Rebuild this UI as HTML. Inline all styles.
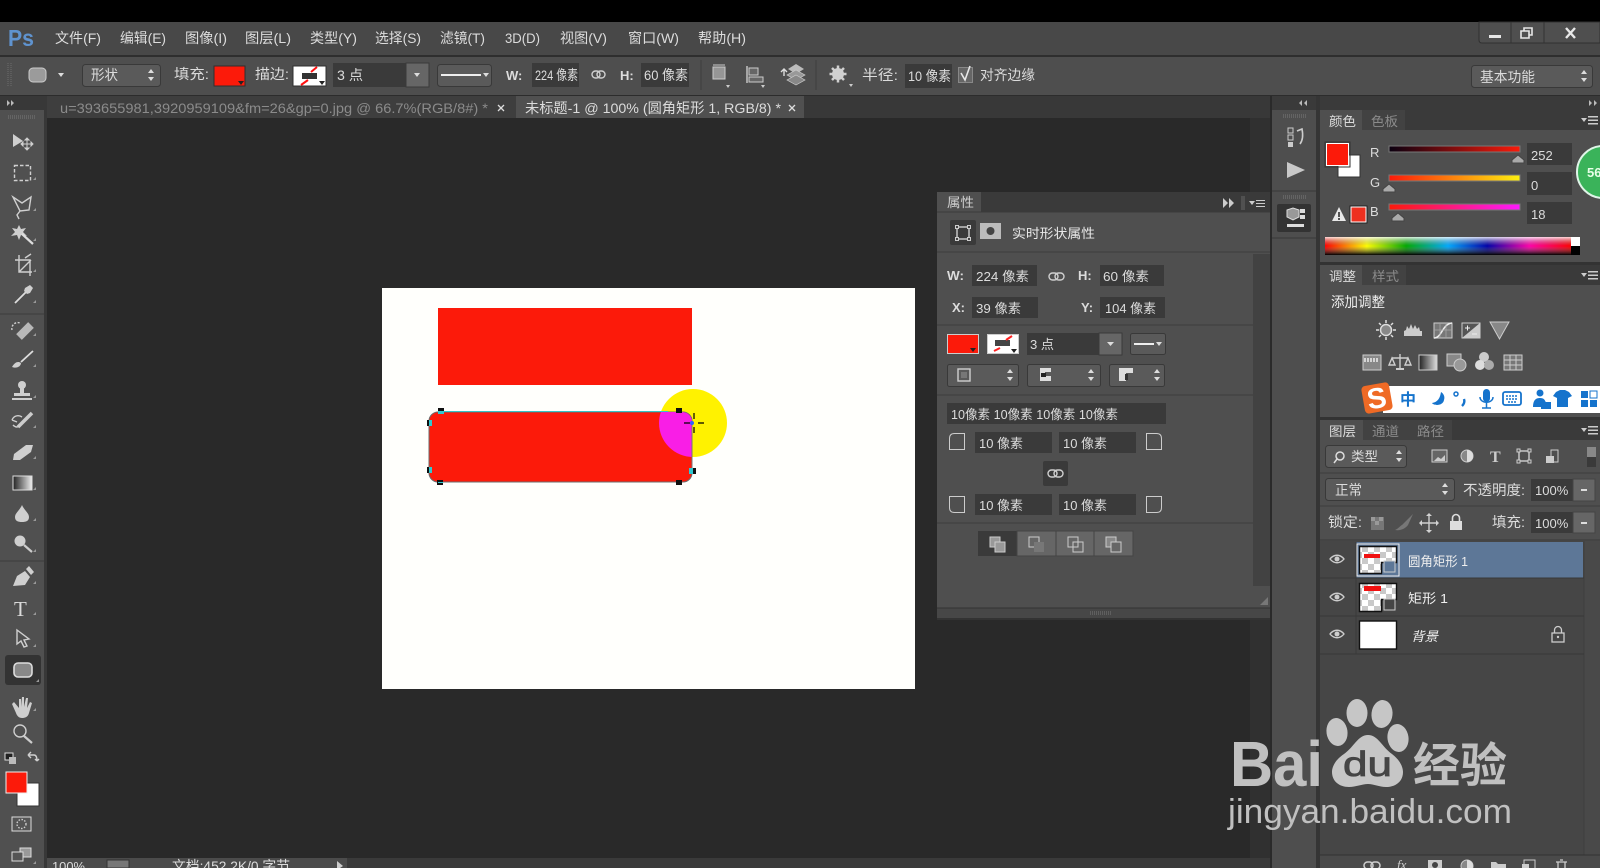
<!DOCTYPE html>
<html lang="zh"><head><meta charset="utf-8"><title>Photoshop</title>
<style>
html,body{margin:0;padding:0;background:#000;width:1600px;height:868px;overflow:hidden}
svg{display:block;position:absolute;left:0;top:0;filter:blur(.35px)}
text{font-family:"Liberation Sans","Noto Sans CJK SC",sans-serif;fill:#dcdcdc;font-size:14px;white-space:pre}
.d{fill:#8b8b8b}.s{font-size:13px}
.i{fill:none;stroke:#cfcfcf;stroke-width:1.4}
.f{fill:#cfcfcf}
.in{fill:#3a3a3a}
.btn{fill:#5a5a5a;stroke:#393939}
</style></head><body>
<svg width="1600" height="868" viewBox="0 0 1600 868" xmlns="http://www.w3.org/2000/svg">
<defs>
<pattern id="ck" width="12" height="12" patternUnits="userSpaceOnUse"><rect width="12" height="12" fill="#fff"/><rect width="6" height="6" fill="#c9c9c9"/><rect x="6" y="6" width="6" height="6" fill="#c9c9c9"/></pattern>
<linearGradient id="spec"><stop offset="0" stop-color="#f00"/><stop offset=".17" stop-color="#ff0"/><stop offset=".33" stop-color="#0a0"/><stop offset=".5" stop-color="#0af"/><stop offset=".66" stop-color="#00a"/><stop offset=".83" stop-color="#f0a"/><stop offset="1" stop-color="#f00"/></linearGradient>
<linearGradient id="specv" x2="0" y2="1"><stop offset="0" stop-color="#fff" stop-opacity=".85"/><stop offset=".5" stop-color="#888" stop-opacity="0"/><stop offset="1" stop-color="#000"/></linearGradient>
<linearGradient id="gr"><stop offset="0" stop-color="#0a0010"/><stop offset="1" stop-color="#fc1a0a"/></linearGradient>
<linearGradient id="gg"><stop offset="0" stop-color="#fc1a0a"/><stop offset="1" stop-color="#fcf010"/></linearGradient>
<linearGradient id="gb"><stop offset="0" stop-color="#fc1a0a"/><stop offset="1" stop-color="#fc1aff"/></linearGradient>
<linearGradient id="gh"><stop offset="0" stop-color="#222"/><stop offset="1" stop-color="#ddd"/></linearGradient>
<clipPath id="rr"><rect x="429" y="412" width="263" height="70" rx="10"/></clipPath>
</defs>

<!-- frame -->
<rect width="1600" height="868" fill="#292929"/>
<rect width="1600" height="22" fill="#000"/>
<rect y="22" width="1600" height="33" fill="#484848"/>
<rect y="55" width="1600" height="2" fill="#2e2e2e"/>
<rect y="57" width="1600" height="39" fill="#4e4e4e"/>
<rect y="95" width="1600" height="1" fill="#2c2c2c"/>
<rect y="96" width="1272" height="22" fill="#383838"/>
<rect x="1250" y="118" width="22" height="750" fill="#303030"/>
<rect x="1272" y="96" width="328" height="14" fill="#3a3a3a"/>

<!-- title bar -->
<text x="8" y="46" style="font-size:23px;font-weight:bold;fill:#5f93cf" textLength="26" lengthAdjust="spacingAndGlyphs">Ps</text>
<text x="55" y="43" textLength="46" lengthAdjust="spacingAndGlyphs">文件(F)</text>
<text x="120" y="43" textLength="46" lengthAdjust="spacingAndGlyphs">编辑(E)</text>
<text x="185" y="43" textLength="42" lengthAdjust="spacingAndGlyphs">图像(I)</text>
<text x="245" y="43" textLength="46" lengthAdjust="spacingAndGlyphs">图层(L)</text>
<text x="310" y="43" textLength="47" lengthAdjust="spacingAndGlyphs">类型(Y)</text>
<text x="375" y="43" textLength="46" lengthAdjust="spacingAndGlyphs">选择(S)</text>
<text x="440" y="43" textLength="45" lengthAdjust="spacingAndGlyphs">滤镜(T)</text>
<text x="505" y="43" textLength="35" lengthAdjust="spacingAndGlyphs">3D(D)</text>
<text x="560" y="43" textLength="47" lengthAdjust="spacingAndGlyphs">视图(V)</text>
<text x="628" y="43" textLength="51" lengthAdjust="spacingAndGlyphs">窗口(W)</text>
<text x="698" y="43" textLength="48" lengthAdjust="spacingAndGlyphs">帮助(H)</text>
<!-- window buttons -->
<path d="M1479 22v18q0 3 3 3h118v-21z" fill="#4f4f4f" stroke="#303030"/>
<path d="M1511 22v21M1544 22v21" stroke="#333"/>
<rect x="1489" y="35" width="12" height="3" fill="#e6e6e6"/>
<path d="M1521 31h8v7h-8zM1524 31v-3h8v7h-3" fill="none" stroke="#e6e6e6" stroke-width="1.6"/>
<path d="M1566 28l9 10M1575 28l-9 10" stroke="#e8e8e8" stroke-width="2.4"/>

<!-- options bar -->
<path d="M8 63v24M11 63v24" stroke="#6c6c6c" stroke-dasharray="1 1"/>
<rect x="29" y="68" width="17" height="14" rx="4" fill="#9b9b9b" stroke="#ccc"/>
<path d="M58 73h6l-3 4z" fill="#ddd"/>
<rect x="82.500" y="64.500" width="78" height="22" rx="3" class="btn"/>
<text x="91" y="80" textLength="27" lengthAdjust="spacingAndGlyphs">形状</text>
<path d="M148 73l3-4 3 4zM148 77l3 4 3-4z" fill="#ddd"/>
<text x="174" y="79" textLength="35" lengthAdjust="spacingAndGlyphs">填充:</text>
<rect x="214" y="66" width="31" height="20" fill="#fc1a0a" stroke="#2f2f2f"/>
<path d="M238 81h6l-3 4z" fill="#222"/>
<text x="255" y="79" textLength="34" lengthAdjust="spacingAndGlyphs">描边:</text>
<rect x="293" y="66" width="33" height="20" fill="#fff" stroke="#2f2f2f"/>
<rect x="302" y="73" width="15" height="6" fill="#333"/>
<path d="M301 85l7-5M311 72l6-5" stroke="#f11" stroke-width="2"/><path d="M319 81h6l-3 4z" fill="#222"/>
<rect x="333" y="63" width="73" height="24" class="in"/><rect x="406" y="63" width="23" height="24" fill="#666" stroke="#3a3a3a"/>
<path d="M414 73h6l-3 4z" fill="#ddd"/>
<text x="337" y="80" textLength="26" lengthAdjust="spacingAndGlyphs">3 点</text>
<rect x="437.500" y="64.500" width="54" height="22" rx="3" class="btn"/>
<rect x="441" y="74" width="40" height="2" fill="#eee"/><path d="M483 73h6l-3 4z" fill="#ddd"/>
<text x="506" y="80" style="font-weight:bold;font-size:13px">W:</text>
<rect x="532" y="63" width="47" height="24" class="in"/>
<text x="535" y="80" textLength="43" lengthAdjust="spacingAndGlyphs">224 像素</text>
<rect x="592" y="71" width="8" height="7" rx="3.500" class="i"/><rect x="597" y="71" width="8" height="7" rx="3.500" class="i"/>
<text x="620" y="80" style="font-weight:bold;font-size:13px">H:</text>
<rect x="641" y="63" width="48" height="24" class="in"/>
<text x="644" y="80" textLength="44" lengthAdjust="spacingAndGlyphs">60 像素</text>
<path d="M701 60v30M816 60v30" stroke="#3e3e3e"/>
<rect x="713" y="67" width="12" height="12" fill="#969696" stroke="#ccc"/><path d="M713 65h12" stroke="#ccc"/><path d="M726 85h4l-2 3z" fill="#ccc"/>
<path d="M747 66v17" stroke="#ccc" stroke-width="1.400"/><rect x="749" y="68" width="9" height="7" fill="#666" stroke="#ccc"/><rect x="749" y="77" width="14" height="5" fill="#666" stroke="#ccc"/><path d="M761 85h4l-2 3z" fill="#ccc"/>
<path d="M796 64l8 5-8 5-8-5z" fill="#bbb"/><path d="M796 70l9 5-9 5-9-5z" fill="#999" stroke="#ccc" stroke-width=".7"/><path d="M796 75l9 5-9 5-9-5z" fill="#888" stroke="#ccc" stroke-width=".7"/>
<path d="M784 76v-7M781 72l3-3 3 3" fill="none" stroke="#ddd" stroke-width="1.400"/>
<g transform="translate(838 74)"><circle r="6" fill="#d0d0d0"/><circle r="2.500" fill="#555"/><path d="M0-8.500V8.500M-8.500 0H8.500M-6-6L6 6M-6 6L6-6" stroke="#d0d0d0" stroke-width="2.500"/></g>
<path d="M849 84h4l-2 3z" fill="#ccc"/>
<text x="862" y="80" textLength="36" lengthAdjust="spacingAndGlyphs">半径:</text>
<rect x="905" y="64" width="47" height="24" class="in"/>
<text x="908" y="81" textLength="43" lengthAdjust="spacingAndGlyphs">10 像素</text>
<rect x="958.500" y="67.500" width="14" height="15" fill="#666" stroke="#888"/><path d="M961 73l4 7 5-14" fill="none" stroke="#e8e8e8" stroke-width="1.600"/>
<text x="980" y="80" textLength="55" lengthAdjust="spacingAndGlyphs">对齐边缘</text>
<rect x="1471.500" y="65.500" width="121" height="22" rx="3" class="btn"/>
<text x="1480" y="82" textLength="55" lengthAdjust="spacingAndGlyphs">基本功能</text>
<path d="M1581 74l3-4 3 4zM1581 78l3 4 3-4z" fill="#ddd"/>

<!-- tabs -->
<path d="M7 100l3 3-3 3zM11 100l3 3-3 3z" fill="#bbb"/>
<rect x="46" y="96" width="470" height="22" fill="#3e3e3e"/>
<rect x="516" y="96" width="288" height="22" fill="#505050"/>
<text x="60" y="113" class="d" textLength="428" lengthAdjust="spacingAndGlyphs">u=393655981,3920959109&amp;fm=26&amp;gp=0.jpg @ 66.7%(RGB/8#) *</text>
<path d="M498 105l6 6M504 105l-6 6M789 105l6 6M795 105l-6 6" stroke="#ddd" stroke-width="1.300"/>
<text x="525" y="113" textLength="256" lengthAdjust="spacingAndGlyphs">未标题-1 @ 100% (圆角矩形 1, RGB/8) *</text>

<!-- left toolbar -->
<rect y="110" width="44" height="758" fill="#505050"/>
<rect x="44" y="96" width="3" height="772" fill="#383838"/>
<path d="M8 116h28M8 118h28" stroke="#777" stroke-dasharray="1 1"/>
<path d="M0 314h44M0 561h44" stroke="#3c3c3c"/>
<!-- move --><path class="f" d="M13 134l10 7-10 6z"/><path d="M27 139v10M22 144h10M27 138l-2 2h4zM27 150l-2-2h4zM21 144l2-2v4zM33 144l-2-2v4z" stroke="#cfcfcf" fill="#cfcfcf" stroke-width="1"/>
<!-- marquee --><rect x="14.500" y="165.500" width="16" height="15" class="i" stroke-dasharray="3.500 2"/>
<!-- lasso --><path class="i" d="M13 197l9 6 9-6-2 13-9 1-7-14zM20 211l-3 4 2 4"/>
<!-- wand --><g transform="translate(19 232)"><path class="f" d="M0-7l2 4 5-1-3 4 4 4-6-1-2 5-2-5-6 1 4-4-3-4 5 1z"/><path d="M3 2l11 10" stroke="#ddd" stroke-width="2.200"/></g>
<!-- crop --><path class="i" d="M19 255v17h13M15 260h15v16M19 272l12-12M25 258l6-4" stroke-width="1.800"/>
<!-- eyedrop --><path d="M15 303l11-11" stroke="#ddd" stroke-width="1.800"/><path class="f" d="M25 288l5-3 3 3-3 5-3 1-3-3z"/>
<!-- heal --><path d="M19 337l12-12" stroke="#b8b8b8" stroke-width="8"/><path class="i" d="M12 330a6 6 0 0 1 8-7" stroke-dasharray="2 1.500"/>
<!-- brush --><path class="f" d="M12 367c3-5 6-6 9-4 0 3-4 6-9 4z"/><path d="M21 362l12-11" stroke="#ddd" stroke-width="1.800"/>
<!-- stamp --><path class="f" d="M12 398h20v2H12zM14 393h16v3H14zM20 387h4v6h-4z"/><circle cx="22" cy="385" r="4" class="f"/>
<!-- history --><path d="M18 427l14-14" stroke="#ccc" stroke-width="3.500"/><path class="i" d="M12 420c2-5 7-5 10-3M12 420l5 2M13 425c3 3 5 2 7 1"/>
<!-- eraser --><path class="f" d="M14 454l12-9h7l-2 7-11 8h-7z"/>
<!-- gradient --><linearGradient id="tg"><stop offset="0" stop-color="#222"/><stop offset="1" stop-color="#eee"/></linearGradient><rect x="13" y="476" width="19" height="14" fill="url(#tg)" stroke="#ddd"/>
<!-- drop --><path class="f" d="M22 505c2 5 7 8 7 12s-3 5-7 5-7-1-7-5 5-7 7-12z"/>
<!-- sponge --><circle cx="20" cy="541" r="5.500" class="f"/><path d="M24 545l8 7" stroke="#ccc" stroke-width="2.200"/>
<!-- pen --><path class="f" d="M13 586l4-10 8-5 5 6-5 8zM26 569l3-3 5 6-3 3z"/>
<!-- T --><text x="14" y="616" style="font-family:'Liberation Serif',serif;font-size:21px;fill:#dadada">T</text>
<!-- path select --><path class="i" d="M17 630l12 9-5 1 3 6-3 1-3-6-4 3z"/>
<!-- rect tool --><rect x="5" y="655" width="36" height="30" rx="3" fill="#333"/><rect x="14" y="663" width="18" height="14" rx="4" fill="#888" stroke="#ddd" stroke-width="1.600"/>
<!-- hand --><path class="f" d="M14 702l5 6v-9h2v8l1-10h2v10l2-9h2l-1 10 3-6 2 1-3 10c-1 4-4 5-7 5s-5-2-6-5l-4-9z"/>
<!-- zoom --><circle cx="20" cy="731" r="6" class="i" stroke-width="2"/><path d="M24 736l8 7" stroke="#ccc" stroke-width="2.200"/>
<!-- swap --><rect x="5" y="753" width="8" height="7" fill="#222" stroke="#ddd"/><rect x="9" y="757" width="7" height="7" fill="#bbb"/>
<path class="i" d="M28 755l6 0c2 0 3 2 3 6M28 755l3-3M28 755l3 3M37 761l-2-2M37 761l2-2"/>
<!-- colors --><rect x="17" y="783" width="22" height="23" fill="#fff" stroke="#333"/><rect x="6" y="772" width="21" height="21" fill="#fc1a0a" stroke="#eee"/>
<rect x="12" y="817" width="19" height="14" fill="#555" stroke="#ddd"/><circle cx="21.500" cy="824" r="4.500" class="i" stroke-dasharray="1.500 1.500" stroke-width="1"/>
<rect x="20" y="848" width="11" height="9" fill="#999" stroke="#ddd"/><rect x="12" y="852" width="11" height="9" fill="#555" stroke="#ddd"/>
<path d="M33 180l3-3v3zM33 211l3-3v3zM33 241l3-3v3zM33 272l3-3v3zM33 303l3-3v3zM33 336l3-3v3zM33 367l3-3v3zM33 398l3-3v3zM33 428l3-3v3zM33 459l3-3v3zM33 490l3-3v3zM33 521l3-3v3zM33 552l3-3v3zM33 584l3-3v3zM33 615l3-3v3zM33 647l3-3v3zM36 682l3-3v3zM33 711l3-3v3zM33 864l3-3v3z" fill="#999"/>

<!-- document -->
<rect x="382" y="288" width="533" height="401" fill="#fffffc"/>
<rect x="438" y="308" width="254" height="77" fill="#fc1a0a"/>
<circle cx="693" cy="423" r="34" fill="#fff200"/>
<rect x="429" y="412" width="263" height="70" rx="9" fill="#fc1a0a" stroke="#6d6d6d" stroke-width="1"/>
<circle cx="693" cy="423" r="34" fill="#f91ee6" clip-path="url(#rr)"/>
<path d="M440 411.500H668" stroke="#35c5c8"/>
<path d="M692 424v46" stroke="#777"/>
<path d="M438 408h6v3h-6zM676 408h6v5h-6zM437 480h6v5h-6zM676 480h6v5h-6zM427 420h2v6h-2zM427 467h2v6h-2zM693 468h3v6h-3z" fill="#101010"/>
<path d="M438 411h6v3h-6zM429 420h3v6h-3zM429 467h3v6h-3zM689 468h4v6h-4zM438 482h5v1h-5z" fill="#30c8d0"/>
<path d="M694 413v6M694 427v6M684 423h6M698 423h6" stroke="#000" stroke-width="1.200"/>
<circle cx="692" cy="423" r="2" fill="#3060ff"/>

<!-- properties panel -->
<rect x="937" y="192" width="334" height="426" fill="#4f4f4f"/>
<rect x="937" y="192" width="334" height="20" fill="#3a3a3a"/>
<rect x="937" y="192" width="44" height="20" fill="#4f4f4f"/>
<text x="947" y="207" class="s" style="fill:#cfcfcf" textLength="27" lengthAdjust="spacingAndGlyphs">属性</text>
<path d="M1223 198l5 5-5 5zM1229 198l5 5-5 5z" fill="#ccc"/><path d="M1242 196v14M1244 196v14" stroke="#666"/>
<path d="M1249 201h6l-3 4z M1256 200h9v1h-9zM1256 203h9v1h-9zM1256 206h9v1h-9z" fill="#ccc"/>
<path d="M937 212h334" stroke="#3b3b3b"/>
<rect x="950" y="220" width="26" height="25" rx="2" fill="#3a3a3a"/>
<rect x="957" y="227" width="12" height="12" class="i" stroke-width="1.200"/><path d="M955.500 225.500h3v3h-3zM967.500 225.500h3v3h-3zM955.500 237.500h3v3h-3zM967.500 237.500h3v3h-3z" fill="#444" stroke="#ccc"/>
<rect x="980" y="223" width="21" height="16" fill="#bbb"/><circle cx="990.500" cy="231" r="4" fill="#444"/>
<text x="1012" y="238" class="s" style="fill:#e8e8e8" textLength="83" lengthAdjust="spacingAndGlyphs">实时形状属性</text>
<path d="M937 252h334" stroke="#3e3e3e"/>
<rect x="1253" y="254" width="18" height="332" fill="#424242"/>
<text x="947" y="280" class="s" style="font-weight:bold" textLength="17" lengthAdjust="spacingAndGlyphs">W:</text>
<rect x="972" y="265" width="65" height="21" class="in"/>
<text x="976" y="281" class="s" textLength="53" lengthAdjust="spacingAndGlyphs">224 像素</text>
<rect x="1049" y="273" width="9" height="7" rx="3.500" class="i"/><rect x="1055" y="273" width="9" height="7" rx="3.500" class="i"/>
<text x="1078" y="280" class="s" style="font-weight:bold">H:</text>
<rect x="1100" y="265" width="64" height="21" class="in"/>
<text x="1103" y="281" class="s" textLength="46" lengthAdjust="spacingAndGlyphs">60 像素</text>
<text x="952" y="312" class="s" style="font-weight:bold">X:</text>
<rect x="972" y="297" width="66" height="21" class="in"/>
<text x="976" y="313" class="s" textLength="45" lengthAdjust="spacingAndGlyphs">39 像素</text>
<text x="1081" y="312" class="s" style="font-weight:bold">Y:</text>
<rect x="1100" y="297" width="65" height="21" class="in"/>
<text x="1105" y="313" class="s" textLength="51" lengthAdjust="spacingAndGlyphs">104 像素</text>
<path d="M937 325h316" stroke="#3e3e3e"/>
<rect x="947.500" y="334.500" width="31" height="19" fill="#fc1a0a" stroke="#ccc"/><path d="M970 348h6l-3 4z" fill="#222"/>
<rect x="987.500" y="334.500" width="31" height="19" fill="#fff" stroke="#ccc"/>
<rect x="995" y="340" width="15" height="6" fill="#444"/><path d="M994 351l6-3M1006 340l6-4" stroke="#f22" stroke-width="2"/>
<path d="M1011 349h6l-3 4z" fill="#222"/>
<rect x="1027" y="333" width="72" height="22" class="in"/><rect x="1099" y="333" width="23" height="22" fill="#666" stroke="#3a3a3a"/>
<path d="M1107 342h7l-3.500 4z" fill="#ddd"/>
<text x="1030" y="349" class="s" textLength="24" lengthAdjust="spacingAndGlyphs">3 点</text>
<rect x="1130.500" y="333.500" width="35" height="21" rx="2" class="btn"/><rect x="1134" y="343" width="20" height="2" fill="#eee"/><path d="M1156 342h6l-3 4z" fill="#ddd"/>
<rect x="947.500" y="364.500" width="71" height="22" rx="2" class="btn"/><rect x="1027.500" y="364.500" width="73" height="22" rx="2" class="btn"/><rect x="1109.500" y="364.500" width="55" height="22" rx="2" class="btn"/>
<rect x="958" y="369" width="12" height="12" class="i" stroke-width="2"/><rect x="961" y="372" width="6" height="6" fill="#777"/>
<path d="M1040 368h11v4h-6v4h6v5h-11z" fill="#ddd"/><rect x="1041" y="373" width="5" height="4" fill="#222"/>
<path d="M1119 368h14v5h-7v8h-7z" fill="#ddd"/><path d="M1125 374h3v6h-3z" fill="#333"/>
<path d="M1007 373l3-4 3 4zM1007 377l3 4 3-4zM1088 373l3-4 3 4zM1088 377l3 4 3-4zM1154 373l3-4 3 4zM1154 377l3 4 3-4z" fill="#ddd"/>
<path d="M937 395h316" stroke="#3e3e3e"/>
<rect x="947" y="403" width="219" height="21" class="in"/>
<text x="951" y="419" class="s" textLength="167" lengthAdjust="spacingAndGlyphs">10像素 10像素 10像素 10像素</text>
<path d="M949.500 449.500v-11q0-5 5-5h10v16z" fill="none" stroke="#ccc"/><path d="M1146.500 449.500v-16h10q5 0 5 5v11z" fill="none" stroke="#ccc"/>
<rect x="975" y="432" width="77" height="21" class="in"/><rect x="1059" y="432" width="77" height="21" class="in"/>
<text x="979" y="448" class="s" textLength="44" lengthAdjust="spacingAndGlyphs">10 像素</text><text x="1063" y="448" class="s" textLength="44" lengthAdjust="spacingAndGlyphs">10 像素</text>
<rect x="1043" y="461" width="25" height="25" rx="2" fill="#3a3a3a"/>
<rect x="1048" y="470" width="9" height="7" rx="3.500" class="i"/><rect x="1054" y="470" width="9" height="7" rx="3.500" class="i"/>
<path d="M949.500 496.500v11q0 5 5 5h10v-16z" fill="none" stroke="#ccc"/><path d="M1146.500 496.500v16h10q5 0 5-5v-11z" fill="none" stroke="#ccc"/>
<rect x="975" y="494" width="77" height="21" class="in"/><rect x="1059" y="494" width="77" height="21" class="in"/>
<text x="979" y="510" class="s" textLength="44" lengthAdjust="spacingAndGlyphs">10 像素</text><text x="1063" y="510" class="s" textLength="44" lengthAdjust="spacingAndGlyphs">10 像素</text>
<path d="M937 523h316" stroke="#3e3e3e"/>
<rect x="978" y="531" width="39" height="25" fill="#3a3a3a"/><rect x="1017" y="531" width="39" height="25" fill="#666" stroke="#444"/><rect x="1056" y="531" width="38" height="25" fill="#666" stroke="#444"/><rect x="1094" y="531" width="39" height="25" fill="#666" stroke="#444"/>
<rect x="990" y="537" width="10" height="10" fill="#999" stroke="#ccc"/><rect x="995" y="542" width="10" height="10" fill="#999" stroke="#ccc"/>
<rect x="1029" y="537" width="10" height="10" fill="#666" stroke="#ccc"/><rect x="1034" y="542" width="10" height="10" fill="#777"/>
<rect x="1068" y="537" width="10" height="10" fill="none" stroke="#ccc"/><rect x="1073" y="542" width="10" height="10" fill="none" stroke="#ccc"/>
<rect x="1106" y="537" width="10" height="10" fill="#888" stroke="#ccc"/><rect x="1111" y="542" width="10" height="10" fill="#666" stroke="#ccc"/>
<rect x="937" y="608" width="334" height="10" fill="#474747"/><path d="M937 608h334" stroke="#333"/>
<path d="M1090 612h22M1090 614h22" stroke="#777" stroke-dasharray="1 1"/>
<path d="M1268 597v8h-8z" fill="#777"/>
<rect x="937" y="618" width="334" height="2" fill="#333"/>

<!-- dock -->
<path d="M1307 100l-3 3 3 3zM1302 100l-3 3 3 3zM1589 100l3 3-3 3zM1594 100l3 3-3 3z" fill="#bbb"/>
<rect x="1272" y="110" width="44" height="758" fill="#4e4e4e"/>
<rect x="1316" y="96" width="4" height="772" fill="#353535"/>
<rect x="1270" y="96" width="2" height="772" fill="#2a2a2a"/>
<path d="M1283 115h24M1283 117h24M1283 196h24M1283 198h24" stroke="#7b7b7b" stroke-dasharray="1 1"/>
<path d="M1272 191h44M1272 238h44" stroke="#383838"/>
<rect x="1288" y="128" width="5" height="5" fill="none" stroke="#ccc"/><rect x="1288" y="135" width="5" height="5" fill="none" stroke="#ccc"/><rect x="1288" y="142" width="5" height="5" fill="#ccc"/>
<path d="M1297 131l5-2c1 5 1 11-2 15" fill="none" stroke="#ccc" stroke-width="1.600"/>
<path d="M1287 162l18 8-18 8z" fill="#c8c8c8"/>
<rect x="1277" y="204" width="34" height="28" rx="2" fill="#333"/>
<path d="M1287 210l6-2 6 2v7l-6 3-6-3z" fill="#999" stroke="#ddd"/><rect x="1300" y="209" width="5" height="4" fill="#ddd"/><rect x="1300" y="215" width="5" height="4" fill="#ddd"/><rect x="1287" y="224" width="17" height="3" fill="#ddd"/>

<rect x="1320" y="110" width="280" height="758" fill="#4f4f4f"/>
<!-- color panel -->
<rect x="1320" y="110" width="280" height="20" fill="#3a3a3a"/>
<rect x="1320" y="110" width="42" height="20" fill="#4f4f4f"/><rect x="1362" y="110" width="43" height="20" fill="#424242"/>
<text x="1329" y="126" class="s" textLength="27" lengthAdjust="spacingAndGlyphs">颜色</text>
<text x="1371" y="126" class="s d" textLength="27" lengthAdjust="spacingAndGlyphs">色板</text>
<path d="M1581 118h6l-3 4zM1588 116h10v1.500h-10zM1588 119.500h10v1.500h-10zM1588 123h10v1.500h-10z" fill="#ccc"/>
<rect x="1338" y="155" width="22" height="22" fill="#fff" stroke="#333"/><rect x="1326.500" y="143.500" width="22" height="22" fill="#fc1a0a" stroke="#fff"/><rect x="1325" y="142" width="25" height="25" fill="none" stroke="#333"/>
<text x="1370" y="157" class="s">R</text><text x="1370" y="187" class="s">G</text><text x="1370" y="216" class="s">B</text>
<rect x="1389" y="146" width="131" height="6" fill="url(#gr)" stroke="#777"/>
<rect x="1389" y="175" width="131" height="6" fill="url(#gg)" stroke="#777"/>
<rect x="1389" y="204" width="131" height="6" fill="url(#gb)" stroke="#777"/>
<path d="M1518 155l6 5v3h-12v-3zM1389 184l6 5v3h-12v-3zM1398 213l6 5v3h-12v-3z" fill="#aaa" stroke="#444"/>
<rect x="1527" y="143" width="45" height="22" class="in"/><rect x="1527" y="172" width="45" height="23" class="in"/><rect x="1527" y="202" width="45" height="22" class="in"/>
<text x="1531" y="160" class="s">252</text><text x="1531" y="190" class="s">0</text><text x="1531" y="219" class="s">18</text>
<path d="M1339 207l7 14h-14z" fill="#e8e8e8"/><path d="M1339 212v5M1339 218v2" stroke="#222" stroke-width="1.500"/>
<rect x="1351" y="207" width="15" height="15" fill="#ee3020" stroke="#fff"/><rect x="1350" y="206" width="17" height="17" fill="none" stroke="#222"/>
<rect x="1325" y="237" width="246" height="18" fill="url(#spec)"/><rect x="1325" y="237" width="246" height="18" fill="url(#specv)"/>
<rect x="1571" y="237" width="9" height="9" fill="#fff"/><rect x="1571" y="246" width="9" height="9" fill="#000"/>
<circle cx="1603" cy="172" r="26" fill="#3ab35a" stroke="#dff5e8" stroke-width="2"/>
<text x="1587" y="177" style="font-size:13px;font-weight:bold;fill:#e8ffe8">56</text>
<rect x="1320" y="262" width="280" height="3" fill="#333"/>
<!-- adjustments -->
<rect x="1320" y="265" width="280" height="20" fill="#3a3a3a"/>
<rect x="1320" y="265" width="42" height="20" fill="#4f4f4f"/><rect x="1362" y="265" width="44" height="20" fill="#424242"/>
<text x="1329" y="281" class="s" textLength="27" lengthAdjust="spacingAndGlyphs">调整</text>
<text x="1372" y="281" class="s d" textLength="27" lengthAdjust="spacingAndGlyphs">样式</text>
<path d="M1581 273h6l-3 4zM1588 271h10v1.500h-10zM1588 274.500h10v1.500h-10zM1588 278h10v1.500h-10z" fill="#ccc"/>
<text x="1331" y="307" style="fill:#eee" textLength="54" lengthAdjust="spacingAndGlyphs">添加调整</text>
<!-- adj icons -->
<g transform="translate(1386 330)"><circle r="5.500" fill="#888" stroke="#ddd" stroke-width="1.500"/><path d="M0-10v3M0 7v3M-10 0h3M7 0h3M-7-7l2 2M5 5l2 2M-7 7l2-2M5-5l2-2" stroke="#ddd" stroke-width="1.500"/></g>
<path d="M1404 336v-5l2-1 1-4 2 3 2-5 2 5 2-4 2 4 2-2 1 4 2 0v5z" fill="#ccc"/>
<g><rect x="1434" y="323" width="18" height="15" fill="#777" stroke="#ccc"/><path d="M1434 338c8 0 8-14 18-15" fill="none" stroke="#eee" stroke-width="1.500"/><path d="M1440 323v15M1446 323v15M1434 330h18" stroke="#aaa" stroke-width=".7"/></g>
<rect x="1462" y="323" width="18" height="15" fill="#555" stroke="#ccc"/><path d="M1462 338l18-15v15z" fill="#ccc"/><path d="M1465 328h5M1467.500 325.500v5M1472 334h5" stroke="#eee"/>
<path d="M1490 322h19l-9.500 17z" fill="#888" stroke="#ccc"/>
<rect x="1363" y="355" width="18" height="15" fill="#888" stroke="#ccc"/><path d="M1365 358v4M1368 358v4M1371 358v4M1374 358v4M1377 358v4" stroke="#eee" stroke-width="1.500"/>
<path class="i" d="M1400 354v14M1392 358h16M1392 358l-3 7h6zM1408 358l-3 7h6z" stroke-width="1.300"/><path d="M1396 369h8" stroke="#ccc" stroke-width="2"/>
<rect x="1419" y="355" width="18" height="15" fill="url(#gh)" stroke="#ccc"/>
<rect x="1447" y="354" width="14" height="12" fill="#888" stroke="#ccc"/><circle cx="1460" cy="365" r="6" fill="#999" stroke="#ccc"/>
<circle cx="1484" cy="357" r="5" fill="#ccc"/><circle cx="1480" cy="365" r="5" fill="#ddd"/><circle cx="1489" cy="365" r="5" fill="#aaa"/>
<rect x="1504" y="355" width="18" height="15" fill="#777" stroke="#ccc"/><path d="M1510 355v15M1516 355v15M1504 360h18M1504 365h18" stroke="#ccc"/>
<rect x="1320" y="417" width="280" height="3" fill="#333"/>
<!-- sogou bar -->
<rect x="1383" y="386" width="217" height="27" fill="#fff"/>
<g transform="translate(1377 398) rotate(-10)"><rect x="-14" y="-14" width="28" height="28" rx="4" fill="#ef6a25"/><text x="-10" y="10" style="font-size:29px;font-weight:bold;fill:#fff">S</text></g>
<text x="1400" y="405" style="font-size:16px;font-weight:bold;fill:#1573cc">中</text>
<path d="M1441 392c-1 6-3 10-9 11 2 3 11 3 12-3 1-3 0-6-3-8z" fill="#1573cc"/>
<circle cx="1456" cy="394" r="2" fill="none" stroke="#1573cc" stroke-width="1.500"/><path d="M1464 399c1 3 0 5-2 7" stroke="#1573cc" stroke-width="2.400" fill="none"/>
<rect x="1483" y="389" width="7" height="13" rx="3.500" fill="#1573cc"/><path d="M1480 397c0 7 13 7 13 0M1486.500 403v5M1482 408h9" stroke="#1573cc" fill="none" stroke-width="1.500"/>
<rect x="1503" y="392" width="18" height="13" rx="2" fill="#fff" stroke="#1573cc" stroke-width="1.800"/><path d="M1506 396h12M1506 399h12M1508 402h8" stroke="#1573cc" stroke-width="1.400" stroke-dasharray="2 1"/>
<circle cx="1540" cy="393" r="3.500" fill="#1573cc"/><path d="M1533 407c0-7 3-9 7-9s5 2 6 5l-5 4z" fill="#1573cc"/><rect x="1541" y="402" width="10" height="7" fill="#1573cc"/>
<path d="M1556 392l4-2h5l4 2 3 4-4 2v9h-11v-9l-4-2z" fill="#1573cc"/>
<rect x="1581" y="391" width="7" height="7" fill="#1573cc"/><rect x="1590" y="391" width="7" height="7" fill="none" stroke="#1573cc"/><rect x="1581" y="400" width="7" height="7" fill="#1573cc"/><rect x="1590" y="400" width="7" height="7" fill="#1573cc"/>

<!-- layers -->
<rect x="1320" y="420" width="280" height="20" fill="#3a3a3a"/>
<rect x="1320" y="420" width="43" height="20" fill="#4f4f4f"/><rect x="1363" y="420" width="44" height="20" fill="#424242"/><rect x="1407" y="420" width="45" height="20" fill="#424242"/>
<text x="1329" y="436" class="s" textLength="27" lengthAdjust="spacingAndGlyphs">图层</text>
<text x="1372" y="436" class="s d" textLength="27" lengthAdjust="spacingAndGlyphs">通道</text>
<text x="1417" y="436" class="s d" textLength="27" lengthAdjust="spacingAndGlyphs">路径</text>
<path d="M1581 428h6l-3 4zM1588 426h10v1.500h-10zM1588 429.500h10v1.500h-10zM1588 433h10v1.500h-10z" fill="#ccc"/>
<rect x="1325.500" y="445.500" width="81" height="22" rx="3" class="btn"/>
<circle cx="1340" cy="456" r="4" fill="none" stroke="#ddd" stroke-width="1.500"/><path d="M1337 459l-3 4" stroke="#ddd" stroke-width="1.500"/>
<text x="1351" y="461" class="s" textLength="27" lengthAdjust="spacingAndGlyphs">类型</text>
<path d="M1396 454l3-4 3 4zM1396 458l3 4 3-4z" fill="#ddd"/>
<rect x="1432" y="450" width="15" height="12" fill="#666" stroke="#ccc"/><path d="M1434 461l4-4 3 2 4-4v6z" fill="#ccc"/>
<circle cx="1467" cy="456" r="6" fill="#888" stroke="#ccc"/><path d="M1467 450a6 6 0 0 1 0 12z" fill="#ddd"/>
<text x="1490" y="462" style="font-family:'Liberation Serif',serif;font-size:16px;font-weight:bold;fill:#ccc">T</text>
<rect x="1519" y="451" width="10" height="10" class="i" stroke-width="1.300"/><path d="M1517 449h3v3h-3zM1528 449h3v3h-3zM1517 460h3v3h-3zM1528 460h3v3h-3z" fill="#555" stroke="#ccc"/>
<path d="M1551 450h7v12h-7z" fill="none" stroke="#ccc"/><rect x="1546" y="456" width="8" height="7" fill="#ccc"/>
<rect x="1587" y="447" width="9" height="10" fill="#888"/><rect x="1587" y="457" width="9" height="10" fill="#3a3a3a"/>
<path d="M1320 473h280" stroke="#3e3e3e"/>
<rect x="1325.500" y="478.500" width="129" height="22" rx="3" class="btn"/>
<text x="1335" y="495" textLength="27" lengthAdjust="spacingAndGlyphs">正常</text>
<path d="M1442 487l3-4 3 4zM1442 491l3 4 3-4z" fill="#ddd"/>
<text x="1463" y="495" textLength="62" lengthAdjust="spacingAndGlyphs">不透明度:</text>
<rect x="1531" y="479" width="42" height="22" class="in"/><rect x="1573" y="479" width="22" height="22" fill="#666" stroke="#444"/>
<text x="1535" y="495" class="s">100%</text><path d="M1581 489h6v2h-6z" fill="#ddd"/>
<path d="M1320 506h280" stroke="#3e3e3e"/>
<text x="1328" y="527" textLength="34" lengthAdjust="spacingAndGlyphs">锁定:</text>
<rect x="1371" y="517" width="13" height="13" fill="#777"/><path d="M1371 517h4v4h-4zM1379 517h4v4h-4zM1375 521h4v4h-4z" fill="#999"/>
<path d="M1395 530c3-1 5-4 7-5l11-11-5 11c-2 3-7 6-13 5z" fill="#777"/>
<path class="i" d="M1429 515v16M1421 523h16" stroke-width="1.600"/><path d="M1429 513l-3 3h6zM1429 533l-3-3h6zM1419 523l3-3v6zM1439 523l-3-3v6z" fill="#d2d2d2"/>
<rect x="1450" y="521" width="12" height="9" fill="#ddd"/><path d="M1452.500 521v-3a3.500 3.500 0 0 1 7 0v3" fill="none" stroke="#ddd" stroke-width="1.600"/>
<text x="1492" y="527" textLength="33" lengthAdjust="spacingAndGlyphs">填充:</text>
<rect x="1531" y="512" width="42" height="21" class="in"/><rect x="1573" y="512" width="22" height="21" fill="#666" stroke="#444"/>
<text x="1535" y="528" class="s">100%</text><path d="M1581 522h6v2h-6z" fill="#ddd"/>
<path d="M1320 540h280" stroke="#383838"/>
<rect x="1320" y="541" width="280" height="314" fill="#464646"/>
<rect x="1584" y="541" width="16" height="314" fill="#494949"/><path d="M1584 541v314" stroke="#3e3e3e"/>
<rect x="1356" y="542" width="227" height="36" fill="#5d7797"/>
<path d="M1320 578h264M1320 616h264M1320 654h264" stroke="#383838"/><path d="M1356 542v112" stroke="#3a3a3a"/>
<!-- eyes -->
<g fill="none" stroke="#ccc" stroke-width="1.400"><path d="M1330 559c4-5 10-5 14 0-4 5-10 5-14 0zM1330 597c4-5 10-5 14 0-4 5-10 5-14 0zM1330 634c4-5 10-5 14 0-4 5-10 5-14 0z"/></g>
<circle cx="1337" cy="559" r="2.500" fill="#ccc"/><circle cx="1337" cy="597" r="2.500" fill="#ccc"/><circle cx="1337" cy="634" r="2.500" fill="#ccc"/>
<!-- thumbs -->
<path d="M1357 544v32h42v-32z" fill="none" stroke="#eee"/>
<path d="M1359.500 546.500h37v16h-15v11h-22z" fill="url(#ck)" stroke="#111" stroke-width="1.400"/><rect x="1364" y="554" width="16" height="4" fill="#f01010"/>
<rect x="1384" y="561" width="11" height="11" fill="#5d7797" stroke="#ccc"/>
<path d="M1359.500 583.500h37v16h-15v12h-22z" fill="url(#ck)" stroke="#111" stroke-width="1.400"/><rect x="1364" y="586" width="17" height="5" fill="#f01010"/>
<rect x="1384" y="599" width="11" height="11" fill="#464646" stroke="#ccc"/>
<rect x="1359.500" y="621" width="37" height="28" fill="#fff" stroke="#111" stroke-width="1.400"/>
<text x="1408" y="566" class="s" style="fill:#eee" textLength="60" lengthAdjust="spacingAndGlyphs">圆角矩形 1</text>
<text x="1408" y="603" class="s" style="fill:#eee" textLength="40" lengthAdjust="spacingAndGlyphs">矩形 1</text>
<text x="1411" y="641" class="s" style="font-style:italic;fill:#eee" textLength="27" lengthAdjust="spacingAndGlyphs">背景</text>
<rect x="1552" y="633" width="12" height="9" fill="none" stroke="#ccc" stroke-width="1.300"/><path d="M1554.500 633v-3a3.500 3.500 0 0 1 7 0v3" fill="none" stroke="#ccc" stroke-width="1.300"/><circle cx="1558" cy="637" r="1.200" fill="#ccc"/>
<rect x="1320" y="855" width="280" height="13" fill="#4a4a4a"/><path d="M1320 855h280" stroke="#333"/>
<g fill="none" stroke="#ccc" stroke-width="1.500"><rect x="1364" y="862" width="9" height="7" rx="3.500"/><rect x="1371" y="862" width="9" height="7" rx="3.500"/></g>
<text x="1397" y="869" style="font-family:'Liberation Serif',serif;font-size:13px;font-style:italic;fill:#ccc">fx</text>
<rect x="1428" y="860" width="14" height="10" fill="#ccc"/><circle cx="1435" cy="865" r="3" fill="#444"/>
<circle cx="1467" cy="866" r="6" fill="#888" stroke="#ccc"/><path d="M1467 860a6 6 0 0 1 0 12z" fill="#ddd"/>
<path d="M1491 862h5l2 2h8v8h-15z" fill="#ccc"/>
<path d="M1524 860h11v10h-11z" fill="none" stroke="#ccc"/><rect x="1522" y="864" width="7" height="7" fill="#ccc"/>
<path d="M1556 862h11M1558 862v8h7v-8M1560 860h3" fill="none" stroke="#ccc" stroke-width="1.300"/>

<!-- status bar -->
<rect x="47" y="858" width="300" height="10" fill="#4b4b4b"/><rect x="347" y="858" width="923" height="10" fill="#3a3a3a"/>
<rect x="107" y="860" width="22" height="8" fill="#777" stroke="#333"/>
<text x="52" y="871" class="s" textLength="33" lengthAdjust="spacingAndGlyphs">100%</text>
<text x="172" y="871" textLength="118" lengthAdjust="spacingAndGlyphs">文档:452.2K/0 字节</text>
<path d="M337 861l6 5-6 4z" fill="#ccc"/>

<!-- baidu watermark -->
<g fill="#c6c6c6">
<ellipse cx="1357" cy="713" rx="10.500" ry="14"/><ellipse cx="1382" cy="714" rx="10.500" ry="14" transform="rotate(6 1382 714)"/>
<ellipse cx="1337" cy="732" rx="10.500" ry="14" transform="rotate(-8 1337 732)"/><ellipse cx="1398" cy="738" rx="10.500" ry="14" transform="rotate(-8 1398 738)"/>
<path d="M1368 735c10 0 14 12 24 19 9 7 11 14 11 18 0 10-8 15-17 15-7 0-12-3-18-3s-12 3-19 3c-10 0-17-6-17-15 0-5 3-12 12-18 10-7 14-19 24-19z"/>
</g>
<text x="1343" y="776" style="font-size:35px;fill:#454545;stroke:#454545;stroke-width:.8" textLength="49" lengthAdjust="spacingAndGlyphs">du</text>
<text x="1230" y="786" style="font-size:64px;font-weight:bold;fill:#c0c0c0" textLength="93" lengthAdjust="spacingAndGlyphs">Bai</text>
<text x="1413" y="782" style="font-size:47px;font-weight:bold;fill:#c0c0c0" textLength="94" lengthAdjust="spacingAndGlyphs">经验</text>
<text x="1228" y="823" style="font-size:34px;fill:#c0c0c0" textLength="284" lengthAdjust="spacingAndGlyphs">jingyan.baidu.com</text>
</svg>
</body></html>
